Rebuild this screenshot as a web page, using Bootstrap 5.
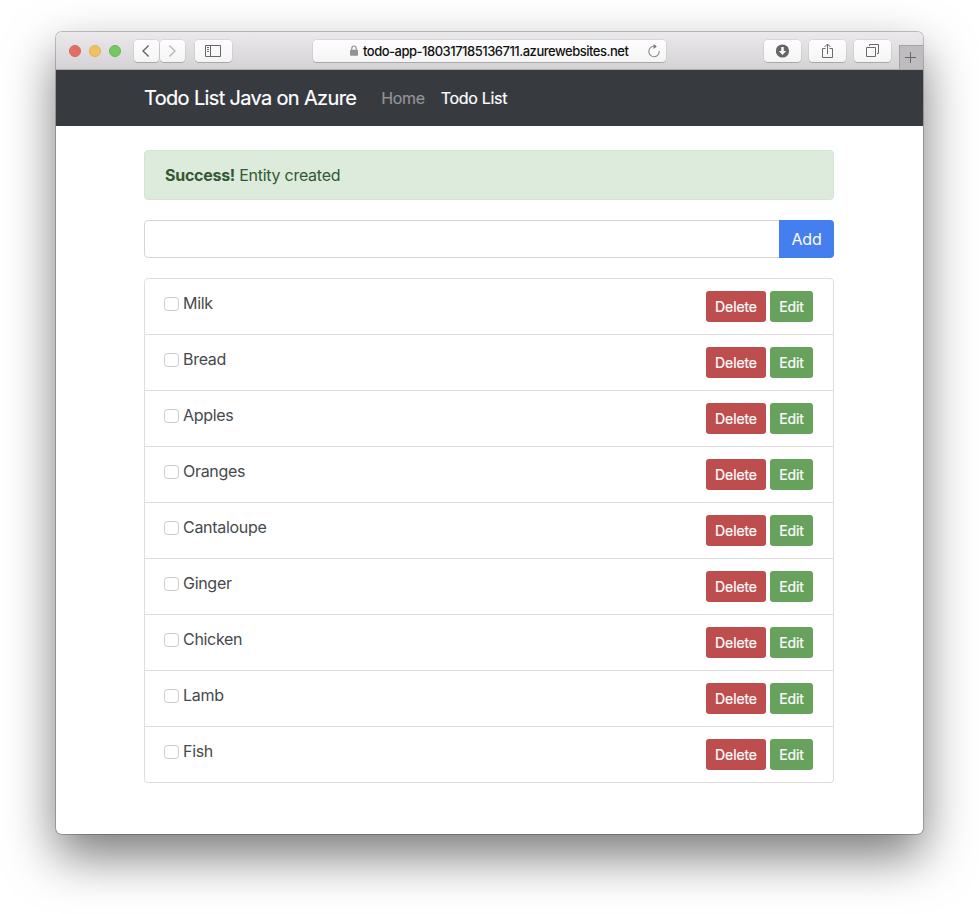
<!DOCTYPE html>
<html lang="en">
<head>
<meta charset="utf-8">
<meta name="viewport" content="width=device-width, initial-scale=1">
<title>Todo List Java on Azure</title>
<link href="https://cdn.jsdelivr.net/npm/bootstrap@5.3.0/dist/css/bootstrap.min.css" rel="stylesheet">
<style>
  body { font-family: Inter, "Liberation Sans", sans-serif; color: #46494d; height: 914px; padding: 32px 56px 0; overflow: hidden; background: #fff; }
  .app-window { height: 802px; border-radius: 6px; background: #fff; box-shadow: 0 0 0 1px rgba(0,0,0,.22), 0 22px 50px rgba(0,0,0,.53); overflow: hidden; }
  .titlebar { height: 38px; padding-left: 13px; background: linear-gradient(#ebe9eb, #d4d2d5); border-bottom: 1px solid #aeacaf; }
  .light { width: 12px; height: 12px; border-radius: 50%; margin-right: 8px; }
  .light-r { background: #e07064; border: 1px solid #d5655b; }
  .light-y { background: #efc15f; border: 1px solid #e0b154; }
  .light-g { background: #76c765; border: 1px solid #67b656; margin-right: 13px; }
  .tool { height: 22px; width: 37px; border-radius: 4px; background: linear-gradient(#fefefe, #f4f4f4); box-shadow: 0 0 0 .5px rgba(0,0,0,.12), 0 1px 0 rgba(0,0,0,.17); display: flex; align-items: center; justify-content: center; }
  .tool-sm { width: 25px; }
  .tool-sm, .tool-side { padding-right: 1px; }
  .tool-next { margin-left: 1px; }
  .tool-side { margin-left: 10px; }
  .tool-gap { margin-left: 8px; }
  .address { width: 353px; margin-left: 81px; margin-right: 98px; padding: 0 5px 0 37px; justify-content: flex-start; }
  .address-text { font-size: 13px; color: #111; font-weight: 500; letter-spacing: -.49px; margin: 2px 0 0 5px; }
  .tab-add { width: 24px; height: 24px; margin-left: 8px; padding-right: 1px; background: #bebcbf; border: 1px solid #a3a1a4; border-width: 1px 0 0 1px; }
  .topnav { height: 56px; background: #373a3f; padding: 0; }
  .page { width: 690px; margin-left: 88px; }
  .topnav .navbar-brand { font-size: 20px; color: #fff; letter-spacing: -.66px; padding: 0; margin-right: 25px; -webkit-text-stroke: .2px; }
  .topnav .navbar-nav .nav-link { font-size: 16px; color: #929497; padding: 0; margin-right: 16px; letter-spacing: -.32px; -webkit-text-stroke: .2px; }
  .topnav .navbar-nav .nav-link.active { color: #fff; }
  .notice { height: 50px; margin: 24px 0 20px; padding: 12px 20px; background: #dcebdc; border: 1px solid #cfe7cd; border-radius: 4px; color: #335833; letter-spacing: -.27px; }
  .entry .form-control { height: 38px; border-color: #d4d5d7; border-radius: 4px 0 0 4px; }
  .entry .btn { width: 55px; padding: 0; border: 0; background: #447eef; color: #fff; border-radius: 0 4px 4px 0; letter-spacing: -.2px; }
  .todos { margin-top: 20px; border-radius: 4px; }
  .todos .list-group-item { height: 56px; padding: 12px 20px 0; border-color: #dedede; color: #46494d; }
  .todos .list-group-item:first-child { height: 57px; }
  .todo-label { letter-spacing: -.3px; line-height: 24px; }
  .todos .form-check-input { width: 15px; height: 14px; margin: 2px 4px 0 -1px; border: 1px solid #cbcbcb; border-radius: 3.5px; }
  .todos .btn { height: 31px; font-size: 14px; padding: 0; border: 0; border-radius: 3px; color: #fff; letter-spacing: -.1px; -webkit-text-stroke: .2px; }
  .todos .btn-del { width: 60px; background: #be4d4d; }
  .todos .btn-edt { width: 43px; background: #67a25d; }
</style>
<script src="https://cdn.jsdelivr.net/npm/bootstrap@5.3.0/dist/js/bootstrap.bundle.min.js"></script>
</head>
<body>
<div class="app-window">
  <div class="titlebar d-flex align-items-center">
    <span class="light light-r"></span><span class="light light-y"></span><span class="light light-g"></span>
    <span class="tool tool-sm"><svg width="10" height="14" viewBox="0 0 10 14" fill="none" stroke="#686868" stroke-width="1.4"><path d="M7.7 1.5 2 7l5.7 5.5"/></svg></span>
    <span class="tool tool-sm tool-next"><svg width="10" height="14" viewBox="0 0 10 14" fill="none" stroke="#b8b8b8" stroke-width="1.4"><path d="M2.3 1.5 8 7l-5.7 5.5"/></svg></span>
    <span class="tool tool-side"><svg width="16" height="12" viewBox="0 0 16 12" fill="none" stroke="#666"><path d="M.5.5h15v11H.5zM5.5.5v11M2 2.5h2M2 4.5h2M2 6.5h2"/></svg></span>
    <div class="tool address">
      <svg width="8" height="11" viewBox="0 0 8 11"><path d="M1.8 5V3.2a2.2 2.2 0 0 1 4.4 0V5" fill="none" stroke="#929292" stroke-width="1.2"/><rect y="4.8" width="8" height="6" rx=".7" fill="#929292"/></svg>
      <span class="address-text">todo-app-180317185136711.azurewebsites.net</span>
      <svg class="ms-auto" width="14" height="14" viewBox="0 0 14 14"><path d="M12.2 7A5.2 5.2 0 1 1 7 2.3h1.6" fill="none" stroke="#888" stroke-width="1.1"/><path d="M6.6 0 9.8 2.4 6.6 5z" fill="#777"/></svg>
    </div>
    <span class="tool"><svg width="14" height="14" viewBox="0 0 14 14"><circle cx="6.5" cy="7" r="6.6" fill="#666"/><path d="M5.3 3h2.4v4h2.4L6.5 10.9 2.9 7h2.4z" fill="#fff"/></svg></span>
    <span class="tool tool-gap"><svg width="12" height="16" viewBox="0 0 12 16" fill="none" stroke="#6a6a6a"><path d="M3.5 5.5h-3v9h10v-9h-3M5.5 11V1M2.5 4l3-3 3 3"/></svg></span>
    <span class="tool tool-gap"><svg width="13" height="13" viewBox="0 0 13 13" fill="none" stroke="#6a6a6a"><path d="M.5 3.5h9v9h-9zM3.5 2V.5h9v9H11"/></svg></span>
    <span class="tab-add d-flex align-items-center justify-content-center align-self-end"><svg width="12" height="12" viewBox="0 0 12 12" stroke="#666"><path d="M5.5 0v11M0 5.5h11"/></svg></span>
  </div>
  <nav class="navbar navbar-expand topnav">
    <div class="page d-flex align-items-center">
      <a class="navbar-brand" href="#">Todo List Java on Azure</a>
      <div class="navbar-nav"><a class="nav-link" href="#">Home</a><a class="nav-link active" href="#">Todo List</a></div>
    </div>
  </nav>
  <main class="page">
    <div class="notice" role="alert"><strong>Success!</strong> <span>Entity created</span></div>
    <form class="input-group entry"><input class="form-control" type="text" aria-label="New item"><button class="btn" type="button">Add</button></form>
    <ul class="list-group todos">
      <li class="list-group-item d-flex align-items-start"><label class="todo-label d-flex align-items-center me-auto"><input class="form-check-input" type="checkbox"><span>Milk</span></label><span class="d-flex gap-1"><button class="btn btn-del">Delete</button><button class="btn btn-edt">Edit</button></span></li>
      <li class="list-group-item d-flex align-items-start"><label class="todo-label d-flex align-items-center me-auto"><input class="form-check-input" type="checkbox"><span>Bread</span></label><span class="d-flex gap-1"><button class="btn btn-del">Delete</button><button class="btn btn-edt">Edit</button></span></li>
      <li class="list-group-item d-flex align-items-start"><label class="todo-label d-flex align-items-center me-auto"><input class="form-check-input" type="checkbox"><span>Apples</span></label><span class="d-flex gap-1"><button class="btn btn-del">Delete</button><button class="btn btn-edt">Edit</button></span></li>
      <li class="list-group-item d-flex align-items-start"><label class="todo-label d-flex align-items-center me-auto"><input class="form-check-input" type="checkbox"><span>Oranges</span></label><span class="d-flex gap-1"><button class="btn btn-del">Delete</button><button class="btn btn-edt">Edit</button></span></li>
      <li class="list-group-item d-flex align-items-start"><label class="todo-label d-flex align-items-center me-auto"><input class="form-check-input" type="checkbox"><span>Cantaloupe</span></label><span class="d-flex gap-1"><button class="btn btn-del">Delete</button><button class="btn btn-edt">Edit</button></span></li>
      <li class="list-group-item d-flex align-items-start"><label class="todo-label d-flex align-items-center me-auto"><input class="form-check-input" type="checkbox"><span>Ginger</span></label><span class="d-flex gap-1"><button class="btn btn-del">Delete</button><button class="btn btn-edt">Edit</button></span></li>
      <li class="list-group-item d-flex align-items-start"><label class="todo-label d-flex align-items-center me-auto"><input class="form-check-input" type="checkbox"><span>Chicken</span></label><span class="d-flex gap-1"><button class="btn btn-del">Delete</button><button class="btn btn-edt">Edit</button></span></li>
      <li class="list-group-item d-flex align-items-start"><label class="todo-label d-flex align-items-center me-auto"><input class="form-check-input" type="checkbox"><span>Lamb</span></label><span class="d-flex gap-1"><button class="btn btn-del">Delete</button><button class="btn btn-edt">Edit</button></span></li>
      <li class="list-group-item d-flex align-items-start"><label class="todo-label d-flex align-items-center me-auto"><input class="form-check-input" type="checkbox"><span>Fish</span></label><span class="d-flex gap-1"><button class="btn btn-del">Delete</button><button class="btn btn-edt">Edit</button></span></li>
    </ul>
  </main>
</div>
</body>
</html>
